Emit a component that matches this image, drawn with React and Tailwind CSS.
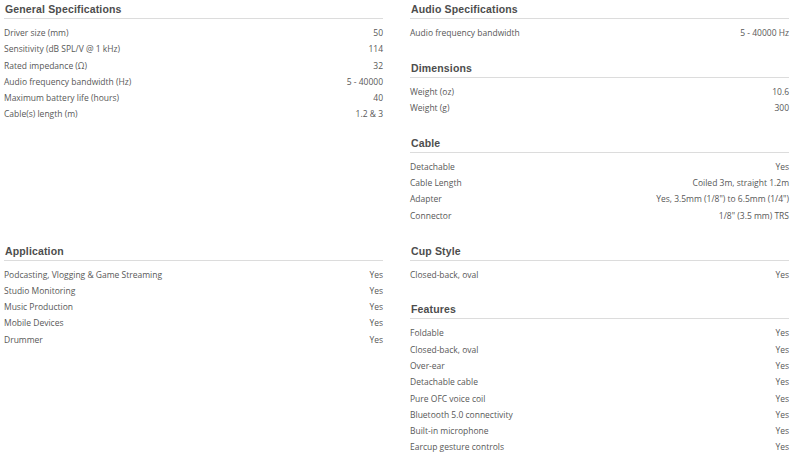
import React from 'react';

const sections = {
  general: {
    title: 'General Specifications',
    rows: [
      ['Driver size (mm)', '50'],
      ['Sensitivity (dB SPL/V @ 1 kHz)', '114'],
      ['Rated impedance (Ω)', '32'],
      ['Audio frequency bandwidth (Hz)', '5 - 40000'],
      ['Maximum battery life (hours)', '40'],
      ['Cable(s) length (m)', '1.2 & 3'],
    ],
  },
  audio: {
    title: 'Audio Specifications',
    rows: [['Audio frequency bandwidth', '5 - 40000 Hz']],
  },
  dimensions: {
    title: 'Dimensions',
    rows: [
      ['Weight (oz)', '10.6'],
      ['Weight (g)', '300'],
    ],
  },
  cable: {
    title: 'Cable',
    rows: [
      ['Detachable', 'Yes'],
      ['Cable Length', 'Coiled 3m, straight 1.2m'],
      ['Adapter', 'Yes, 3.5mm (1/8") to 6.5mm (1/4")'],
      ['Connector', '1/8" (3.5 mm) TRS'],
    ],
  },
  application: {
    title: 'Application',
    rows: [
      ['Podcasting, Vlogging & Game Streaming', 'Yes'],
      ['Studio Monitoring', 'Yes'],
      ['Music Production', 'Yes'],
      ['Mobile Devices', 'Yes'],
      ['Drummer', 'Yes'],
    ],
  },
  cup: {
    title: 'Cup Style',
    rows: [['Closed-back, oval', 'Yes']],
  },
  features: {
    title: 'Features',
    rows: [
      ['Foldable', 'Yes'],
      ['Closed-back, oval', 'Yes'],
      ['Over-ear', 'Yes'],
      ['Detachable cable', 'Yes'],
      ['Pure OFC voice coil', 'Yes'],
      ['Bluetooth 5.0 connectivity', 'Yes'],
      ['Built-in microphone', 'Yes'],
      ['Earcup gesture controls', 'Yes'],
    ],
  },
};

const Section = ({ data }) => (
  <div className="mb-[17.5px]">
    <h2 className="h-[19px] border-b border-[#dcdcdc] pl-[1px] text-[10.5px] leading-[18px] font-bold tracking-[0.15px] text-[#4d4d4d] font-['Liberation_Sans',Arial,sans-serif]">
      {data.title}
    </h2>
    <div className="pt-[6px]">
      {data.rows.map(([label, value]) => (
        <div
          key={label}
          className="flex justify-between h-[16.3px] text-[8.5px] leading-[16.3px] text-[#585858] font-['Open_Sans',sans-serif]"
        >
          <span>{label}</span>
          <span>{value}</span>
        </div>
      ))}
    </div>
  </div>
);

const App = () => {
  return (
    <div className="w-[800px] h-[458px] bg-white overflow-hidden pl-[4px] pr-[11px]">
      <div className="grid grid-cols-[379px_379px] gap-x-[27px]">
        <div>
          <Section data={sections.general} />
        </div>
        <div>
          <Section data={sections.audio} />
          <Section data={sections.dimensions} />
          <Section data={sections.cable} />
        </div>
        <div>
          <Section data={sections.application} />
        </div>
        <div>
          <Section data={sections.cup} />
          <Section data={sections.features} />
        </div>
      </div>
    </div>
  );
};

export default App;
